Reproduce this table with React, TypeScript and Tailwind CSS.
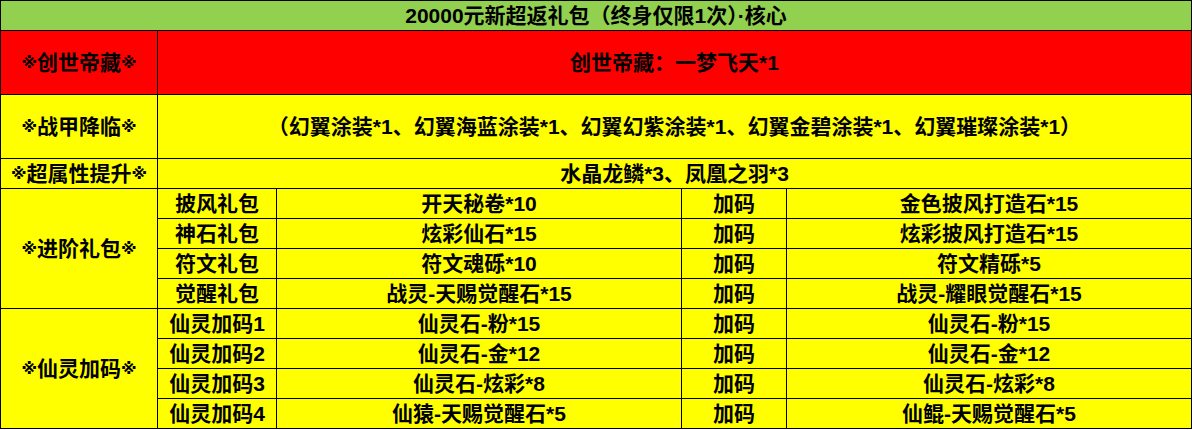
const rows = [
  { group: '进阶礼包', name: '披风礼包', item: '开天秘卷*10', extra: '金色披风打造石*15' },
  { group: '', name: '神石礼包', item: '炫彩仙石*15', extra: '炫彩披风打造石*15' },
  { group: '', name: '符文礼包', item: '符文魂砾*10', extra: '符文精砾*5' },
  { group: '', name: '觉醒礼包', item: '战灵-天赐觉醒石*15', extra: '战灵-耀眼觉醒石*15' },
  { group: '仙灵加码', name: '仙灵加码1', item: '仙灵石-粉*15', extra: '仙灵石-粉*15' },
  { group: '', name: '仙灵加码2', item: '仙灵石-金*12', extra: '仙灵石-金*12' },
  { group: '', name: '仙灵加码3', item: '仙灵石-炫彩*8', extra: '仙灵石-炫彩*8' },
  { group: '', name: '仙灵加码4', item: '仙猿-天赐觉醒石*5', extra: '仙鲲-天赐觉醒石*5' },
]

const cell = 'flex items-center justify-center bg-[#ffff00] whitespace-nowrap'

function Mark() {
  return <span className="font-['DejaVu_Sans',sans-serif] text-[16px] font-bold">※</span>
}

function Label({ text }: { text: string }) {
  return (
    <>
      <Mark />
      {text}
      <Mark />
    </>
  )
}

export default function App() {
  return (
    <div
      className="w-[1192px] grid grid-cols-[156px_118px_404px_104px_404px] grid-rows-[29px_63px_63px_29px_repeat(8,29px)] gap-px p-px bg-black text-[21px] leading-none font-semibold text-black"
      style={{ fontFamily: '"Liberation Sans", "Noto Sans CJK SC", sans-serif' }}
    >
      <div className="col-span-5 flex items-center justify-center bg-[#92d050]">20000元新超返礼包（终身仅限1次）·核心</div>

      <div className="flex items-center justify-center bg-[#ff0000]"><Label text="创世帝藏" /></div>
      <div className="col-span-4 flex items-center justify-center bg-[#ff0000]">创世帝藏：一梦飞天*1</div>

      <div className={cell}><Label text="战甲降临" /></div>
      <div className={`col-span-4 ${cell}`}>（幻翼涂装*1、幻翼海蓝涂装*1、幻翼幻紫涂装*1、幻翼金碧涂装*1、幻翼璀璨涂装*1）</div>

      <div className={cell}><Label text="超属性提升" /></div>
      <div className={`col-span-4 ${cell}`}>水晶龙鳞*3、凤凰之羽*3</div>

      {rows.map((r) => (
        <>
          {r.group && <div key={r.group} className={`row-span-4 ${cell}`}><Label text={r.group} /></div>}
          <div key={r.name} className={cell}>{r.name}</div>
          <div key={r.name + 'i'} className={cell}>{r.item}</div>
          <div key={r.name + 'j'} className={cell}>加码</div>
          <div key={r.name + 'e'} className={cell}>{r.extra}</div>
        </>
      ))}
    </div>
  )
}
